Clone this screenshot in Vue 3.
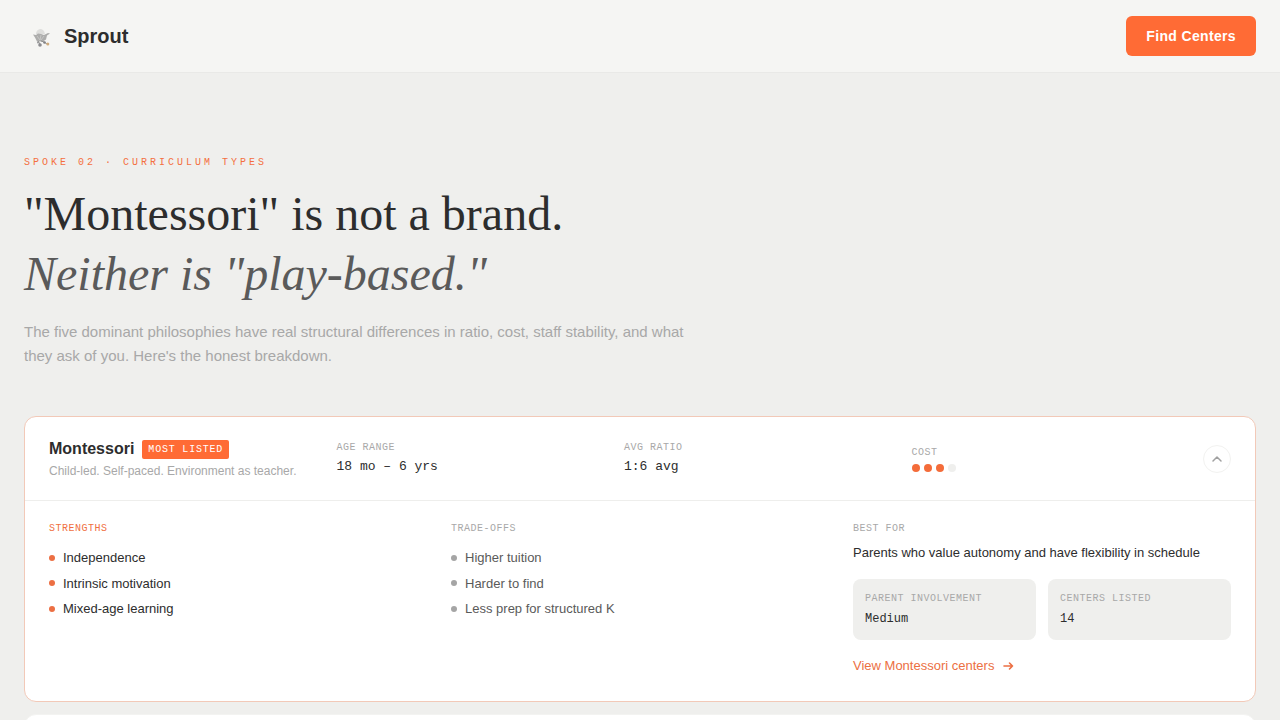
<script setup>
import { ref } from 'vue'

const open = ref(true)
const strengths = ['Independence', 'Intrinsic motivation', 'Mixed-age learning']
const tradeoffs = ['Higher tuition', 'Harder to find', 'Less prep for structured K']
const stats = [
  { label: 'Parent involvement', value: 'Medium' },
  { label: 'Centers listed', value: '14' },
]
const cost = 3
</script>

<template>
  <header class="topbar">
    <a class="brand" href="#">
      <svg class="logo" viewBox="0 0 32 32" aria-hidden="true">
        <path d="M12 14q0-4 4-5 4 0 5 5z" fill="#dededc" />
        <path d="M9 14.500l3 .5 2-1.500 3 .5 3 1 4-2 2 .5-3 2-1 4-3 2h-6l-2-4z" fill="#adadac" />
        <path d="M13 16l3 4M17 15l-1 5M20 16l-3 4" stroke="#c6c6c4" stroke-width="1" />
        <path d="M14 21l2 3M17 21l3 1 3 2" fill="none" stroke="#8e8e8c" stroke-width="1" />
        <circle cx="16" cy="25" r="1.800" fill="#8c8c90" />
        <circle cx="20.500" cy="22.500" r="1.300" fill="#808084" />
        <circle cx="14" cy="22.500" r="1" fill="#98989a" />
        <circle cx="23.800" cy="24" r="1.500" fill="#cfab7c" />
      </svg>
      <span>Sprout</span>
    </a>
    <button class="cta" type="button">Find Centers</button>
  </header>

  <main class="page">
    <p class="eyebrow">Spoke 02 · Curriculum Types</p>
    <h1>"Montessori" is not a brand.<br /><em>Neither is "play-based."</em></h1>
    <p class="intro">
      The five dominant philosophies have real structural differences in ratio, cost, staff
      stability, and what they ask of you. Here's the honest breakdown.
    </p>

    <div class="cards">
      <article class="card active">
        <div class="summary">
          <div>
            <div class="title">
              <h2>Montessori</h2>
              <span class="badge">Most listed</span>
            </div>
            <p class="tagline">Child-led. Self-paced. Environment as teacher.</p>
          </div>
          <div>
            <p class="label">Age range</p>
            <p class="value">18 mo – 6 yrs</p>
          </div>
          <div>
            <p class="label">Avg ratio</p>
            <p class="value">1:6 avg</p>
          </div>
          <div>
            <p class="label">Cost</p>
            <div class="dots" role="img" aria-label="3 of 4">
              <i v-for="n in 4" :key="n" :class="{ on: n <= cost }"></i>
            </div>
          </div>
          <button class="toggle" type="button" aria-label="Toggle details" :aria-expanded="open" @click="open = !open">
            <svg width="12" height="12" viewBox="0 0 12 12" fill="none" aria-hidden="true">
              <path d="M2 8l4-4 4 4" stroke="#a0a0a0" stroke-width="1.5" stroke-linecap="round" stroke-linejoin="round" />
            </svg>
          </button>
        </div>

        <div v-if="open" class="details">
          <section>
            <h3 class="label accent">Strengths</h3>
            <ul>
              <li v-for="s in strengths" :key="s">{{ s }}</li>
            </ul>
          </section>
          <section>
            <h3 class="label">Trade-offs</h3>
            <ul class="muted">
              <li v-for="t in tradeoffs" :key="t">{{ t }}</li>
            </ul>
          </section>
          <section>
            <h3 class="label">Best for</h3>
            <p class="best">Parents who value autonomy and have flexibility in schedule</p>
            <div class="stats">
              <div v-for="s in stats" :key="s.label" class="stat">
                <p class="label">{{ s.label }}</p>
                <p class="stat-value">{{ s.value }}</p>
              </div>
            </div>
            <a class="more" href="#">
              View Montessori centers
              <svg width="12" height="12" viewBox="0 0 12 12" fill="none" aria-hidden="true">
                <path d="M2 6h8.500M7.500 3L10.500 6l-3 3" stroke="currentColor" stroke-width="1.6" stroke-linecap="round" stroke-linejoin="round" />
              </svg>
            </a>
          </section>
        </div>
      </article>
      <article class="card"></article>
    </div>
  </main>
</template>

<style>
body {
  background: #efefed;
}
html {
  scrollbar-width: none;
}
</style>

<style scoped>
.topbar,
.page {
  font-family: "Liberation Sans", Arial, sans-serif;
  color: #2d2d2d;
}
p,
h1,
h2,
h3,
ul {
  margin: 0;
  padding: 0;
}
.topbar {
  display: flex;
  align-items: center;
  justify-content: space-between;
  padding: 16px 24px;
  background: #f5f5f3;
  border-bottom: 1px solid #e9e9e7;
}
.brand {
  display: flex;
  align-items: center;
  gap: 8px;
  font-size: 20px;
  font-weight: 700;
  color: #2d2d2d;
  text-decoration: none;
}
.logo {
  width: 32px;
  height: 32px;
}
.cta {
  height: 40px;
  padding: 0 20px;
  border: 0;
  border-radius: 6px;
  background: #ff6b35;
  color: #fff;
  font: 700 14px "Liberation Sans", Arial, sans-serif;
  letter-spacing: 0.025em;
}
.page {
  padding: 82px 24px 0;
}
.eyebrow {
  font: 10px/15px "Liberation Mono", monospace;
  letter-spacing: 0.3em;
  text-transform: uppercase;
  color: #f4703f;
}
h1 {
  margin-top: 14px;
  font: 400 48px/60px "Liberation Serif", "Times New Roman", serif;
}
h1 em {
  color: #5a5a5a;
}
.intro {
  max-width: 672px;
  margin-top: 16px;
  font-size: 15px;
  line-height: 24px;
  color: #a8a8a8;
}
.cards {
  display: flex;
  flex-direction: column;
  gap: 12px;
  margin-top: 48px;
}
.card {
  min-height: 64px;
  border: 1px solid #f3f3f1;
  border-radius: 12px;
  background: #fff;
}
.card.active {
  border-color: #f2c9b8;
}
.summary {
  display: grid;
  grid-template-columns: repeat(4, 1fr) 32px;
  gap: 16px;
  align-items: center;
  padding: 20px 24px;
}
.title {
  display: flex;
  align-items: center;
  gap: 8px;
}
h2 {
  font-size: 16px;
  line-height: 24px;
}
.badge {
  padding: 2px 6px;
  border-radius: 2px;
  background: #ff6b35;
  color: #fff;
  font: 10px/15px "Liberation Mono", monospace;
  letter-spacing: 0.08em;
  text-transform: uppercase;
}
.tagline {
  margin-top: 1px;
  font-size: 12px;
  line-height: 18px;
  color: #a8a8a8;
}
.label {
  font: 10px/15px "Liberation Mono", monospace;
  letter-spacing: 0.05em;
  text-transform: uppercase;
  color: #a8a8a8;
}
.label.accent {
  color: #f0703f;
}
.value {
  margin-top: 2px;
  font: 13px/20px "Liberation Mono", monospace;
}
.dots {
  display: flex;
  gap: 4px;
  margin-top: 4px;
}
.dots i {
  width: 8px;
  height: 8px;
  border-radius: 50%;
  background: #efefed;
}
.dots i.on {
  background: #f46c3a;
}
.toggle {
  display: grid;
  place-items: center;
  justify-self: end;
  width: 28px;
  height: 28px;
  padding: 0;
  border: 1px solid #f2f2f0;
  border-radius: 50%;
  background: #fff;
}
.details {
  display: grid;
  grid-template-columns: repeat(3, 1fr);
  gap: 24px;
  padding: 20px 24px 25px;
  border-top: 1px solid #eeeeec;
}
ul {
  display: grid;
  gap: 6px;
  margin-top: 12px;
  list-style: none;
}
li {
  display: flex;
  align-items: center;
  gap: 8px;
  font-size: 13px;
  line-height: 1.5;
}
li::before {
  content: "";
  width: 6px;
  height: 6px;
  border-radius: 50%;
  background: #ec6f43;
}
.muted li {
  color: #5a5a5a;
}
.muted li::before {
  background: #a5a5a5;
}
.best {
  margin-top: 7px;
  font-size: 13px;
  line-height: 20px;
}
.stats {
  display: grid;
  grid-template-columns: 1fr 1fr;
  gap: 12px;
  margin-top: 16px;
}
.stat {
  padding: 12px;
  border-radius: 8px;
  background: #efefed;
}
.stat-value {
  margin-top: 4px;
  font: 12px/18px "Liberation Mono", monospace;
}
.more {
  display: inline-flex;
  align-items: center;
  gap: 8px;
  margin-top: 16px;
  font-size: 13px;
  line-height: 20px;
  color: #ec6f43;
  text-decoration: none;
}
</style>
